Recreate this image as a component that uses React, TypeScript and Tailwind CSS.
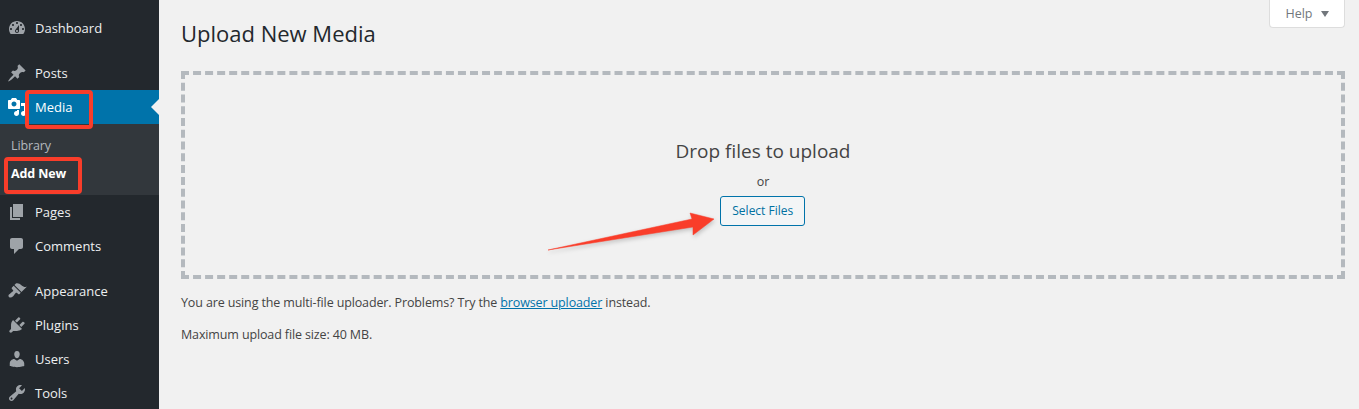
import type { ReactNode } from "react";

const icons: Record<string, string> = {
  dashboard:
    "M3.76 16h12.48c1.1-1.37 1.76-3.11 1.76-5 0-4.42-3.58-8-8-8s-8 3.58-8 8c0 1.89.66 3.63 1.76 5zM10 4c.55 0 1 .45 1 1s-.45 1-1 1-1-.45-1-1 .45-1 1-1zM6 6c.55 0 1 .45 1 1s-.45 1-1 1-1-.45-1-1 .45-1 1-1zm8 0c.55 0 1 .45 1 1s-.45 1-1 1-1-.45-1-1 .45-1 1-1zm-5.37 5.55L12 7v6c0 1.1-.9 2-2 2s-2-.9-2-2c0-.57.24-1.08.63-1.45zM4 10c.55 0 1 .45 1 1s-.45 1-1 1-1-.45-1-1 .45-1 1-1zm12 0c.55 0 1 .45 1 1s-.45 1-1 1-1-.45-1-1 .45-1 1-1zm-5 3c0-.55-.45-1-1-1s-1 .45-1 1 .45 1 1 1 1-.45 1-1z",
  posts:
    "M10.44 3.02l1.82-1.82 6.36 6.35-1.83 1.82c-1.05-.68-2.48-.57-3.41.36l-.75.75c-.92.93-1.04 2.35-.35 3.41l-1.83 1.82-2.41-2.41-2.8 2.79c-.42.42-3.38 2.71-3.8 2.29s1.86-3.39 2.28-3.81l2.79-2.79L4.1 9.36l1.83-1.82c1.05.69 2.48.57 3.4-.36l.75-.75c.93-.92 1.05-2.35.36-3.41z",
  media:
    "M13 11V4c0-.55-.45-1-1-1h-1.67L9 1H5L3.67 3H2c-.55 0-1 .45-1 1v7c0 .55.45 1 1 1h10c.55 0 1-.45 1-1zM7 4.5c1.38 0 2.5 1.12 2.5 2.5S8.38 9.5 7 9.5 4.5 8.38 4.5 7 5.62 4.5 7 4.5zM14 6h5v10.5c0 1.38-1.12 2.5-2.5 2.5S14 17.88 14 16.5s1.12-2.5 2.5-2.5c.17 0 .34.02.5.05V9h-3V6zm-4 8.05V13h2v3.5c0 1.38-1.12 2.5-2.5 2.5S7 17.88 7 16.5 8.12 14 9.5 14c.17 0 .34.02.5.05z",
  pages: "M6 15V2h10v13H6zm-1 1h8v2H3V5h2v11z",
  comments:
    "M5 2h9c1.1 0 2 .9 2 2v7c0 1.1-.9 2-2 2h-2l-5 5v-5H5c-1.1 0-2-.9-2-2V4c0-1.1.9-2 2-2z",
  appearance:
    "M14.48 11.06L7.41 3.99l1.5-1.5c.5-.56 2.3-.47 3.51.32 1.21.8 1.43 1.28 2.91 2.1 1.18.64 2.45 1.26 4.45.85zm-.71.71L6.7 4.7 4.93 6.47c-.39.39-.39 1.02 0 1.41l1.06 1.06c.39.39.39 1.03 0 1.42-.6.6-1.43 1.11-2.21 1.69-.35.26-.7.53-1.01.84C1.43 13.23.99 14.96 2 16c1.01 1.03 2.76.57 4.13-.8.31-.31.58-.66.85-1.01.57-.78 1.08-1.61 1.69-2.21.39-.39 1.02-.39 1.41 0l1.06 1.06c.39.39 1.02.39 1.41 0z",
  plugins:
    "M13.11 4.36L9.87 7.6 8 5.73l3.24-3.24c.35-.34 1.05-.2 1.56.32.52.51.66 1.21.31 1.55zm-8 1.77l.91-1.12 9.01 9.01-1.19.84c-.71.71-2.63 1.16-3.82 1.16H6.14L4.9 17.26c-.59.59-1.54.59-2.12 0-.59-.58-.59-1.53 0-2.12l1.24-1.24v-3.88c0-1.13.4-3.19 1.09-3.89zm7.26 3.97l3.24-3.24c.34-.35 1.04-.21 1.55.31.52.51.66 1.21.31 1.55l-3.24 3.25z",
  users:
    "M10 9.25c-2.27 0-2.73-3.44-2.73-3.44C7 4.02 7.82 2 9.97 2c2.16 0 2.98 2.02 2.71 3.81 0 0-.41 3.44-2.68 3.44zm0 2.57L12.72 10c2.39 0 4.52 2.33 4.52 4.53v2.49s-3.65 1.13-7.24 1.13c-3.65 0-7.24-1.13-7.24-1.13v-2.49c0-2.25 1.94-4.48 4.47-4.48z",
  tools:
    "M16.68 9.77c-1.34 1.34-3.3 1.67-4.95.99l-5.41 6.52c-.99.99-2.59.99-3.58 0s-.99-2.59 0-3.57l6.52-5.42c-.68-1.65-.35-3.61.99-4.95 1.28-1.28 3.12-1.62 4.72-1.06l-2.89 2.89 2.82 2.82 2.86-2.87c.53 1.58.18 3.39-1.08 4.65zM3.81 16.21c.4.39 1.04.39 1.43 0 .4-.4.4-1.04 0-1.43-.39-.4-1.03-.4-1.43 0-.39.39-.39 1.03 0 1.43z",
};

const MenuItem = ({ icon, label, active }: { icon: string; label: string; active?: boolean }) => (
  <div
    className={`relative flex h-[34px] items-center gap-[8px] pl-[7px] text-[13px] ${
      active ? "bg-[#0073aa] text-white" : "text-[#eef0f1]"
    }`}
  >
    <svg
      viewBox="0 0 20 20"
      className={`h-[20px] w-[20px] shrink-0 ${active ? "fill-white" : "fill-[#9ea3a8]"}`}
    >
      <path fillRule="evenodd" d={icons[icon]} />
    </svg>
    <span className="pt-[1px]">{label}</span>
    {active && (
      <span className="absolute right-0 top-[9px] h-0 w-0 border-y-[8px] border-r-[8px] border-y-transparent border-r-[#f1f1f1]" />
    )}
  </div>
);

const Highlight = ({ className, children }: { className: string; children?: ReactNode }) => (
  <div className={`absolute rounded-[4px] border-[4px] border-[#f93d2a] ${className}`}>{children}</div>
);

const App = () => {
  return (
    <div
      className="relative flex h-[409px] overflow-hidden bg-[#f1f1f1] text-[#444444]"
      style={{ fontFamily: '"Open Sans", "Noto Sans", sans-serif' }}
    >
      {/* Sidebar */}
      <aside className="w-[159px] shrink-0 bg-[#23282d] pt-[11px]">
        <MenuItem icon="dashboard" label="Dashboard" />
        <div className="h-[11px]" />
        <MenuItem icon="posts" label="Posts" />
        <MenuItem icon="media" label="Media" active />
        <div className="h-[71px] bg-[#32373c] pl-[11px] pt-[13px] text-[12.5px] tracking-[-0.13px]">
          <div className="h-[28px] leading-[18px] text-[#b4b9be]">Library</div>
          <div className="font-bold leading-[18px] text-white">Add New</div>
        </div>
        <MenuItem icon="pages" label="Pages" />
        <MenuItem icon="comments" label="Comments" />
        <div className="h-[11px]" />
        <MenuItem icon="appearance" label="Appearance" />
        <MenuItem icon="plugins" label="Plugins" />
        <MenuItem icon="users" label="Users" />
        <MenuItem icon="tools" label="Tools" />
      </aside>

      {/* Content */}
      <main className="relative min-w-0 flex-1 pl-[22px] pr-[14px]">
        <div className="absolute right-[14px] top-0 flex h-[28px] w-[76px] items-center justify-center gap-[8px] rounded-b-[4px] border border-t-0 border-[#dddddd] bg-white pt-[1px] text-[12.5px] text-[#72777c]">
          Help
          <span className="h-0 w-0 border-x-[4px] border-t-[6px] border-x-transparent border-t-[#72777c]" />
        </div>

        <h1 className="pt-[17px] text-[22px] font-normal leading-[32px] text-[#23282d]">Upload New Media</h1>

        <div className="mt-[22px] flex h-[208px] flex-col items-center border-[4px] border-dashed border-[#b4b9be] pt-[60px]">
          <div className="text-[19px] leading-[32px]">Drop files to upload</div>
          <div className="mt-[5px] text-[12.5px] leading-[20px]">or</div>
          <button className="mr-[0.5px] mt-[4px] h-[30px] w-[85px] rounded-[3px] border border-[#0073aa] bg-[#f3f5f6] text-[12px] text-[#0071a1]">
            Select Files
          </button>
        </div>

        <p className="mt-[14px] text-[12.5px] leading-[20px] tracking-[-0.13px]">
          You are using the multi-file uploader. Problems? Try the{" "}
          <a className="text-[#0073aa] underline">browser uploader</a> instead.
        </p>
        <p className="mt-[12px] text-[12.5px] leading-[20px] tracking-[-0.13px]">Maximum upload file size: 40 MB.</p>
      </main>

      {/* Annotations */}
      <Highlight className="left-[25px] top-[90px] h-[39px] w-[68px]" />
      <Highlight className="left-[4px] top-[157px] h-[37px] w-[78px]" />
      <svg className="absolute left-[540px] top-[205px] h-[55px] w-[185px]" viewBox="540 205 185 55">
        <polygon
          points="548,250 692,219 690,213 714,219 693,235 693,227"
          fill="#f93d2a"
          stroke="#f93d2a"
          strokeWidth="0.5"
          strokeLinejoin="round"
          className="drop-shadow-[1px_2px_2px_rgba(0,0,0,0.2)]"
        />
      </svg>
    </div>
  );
};

export default App;
